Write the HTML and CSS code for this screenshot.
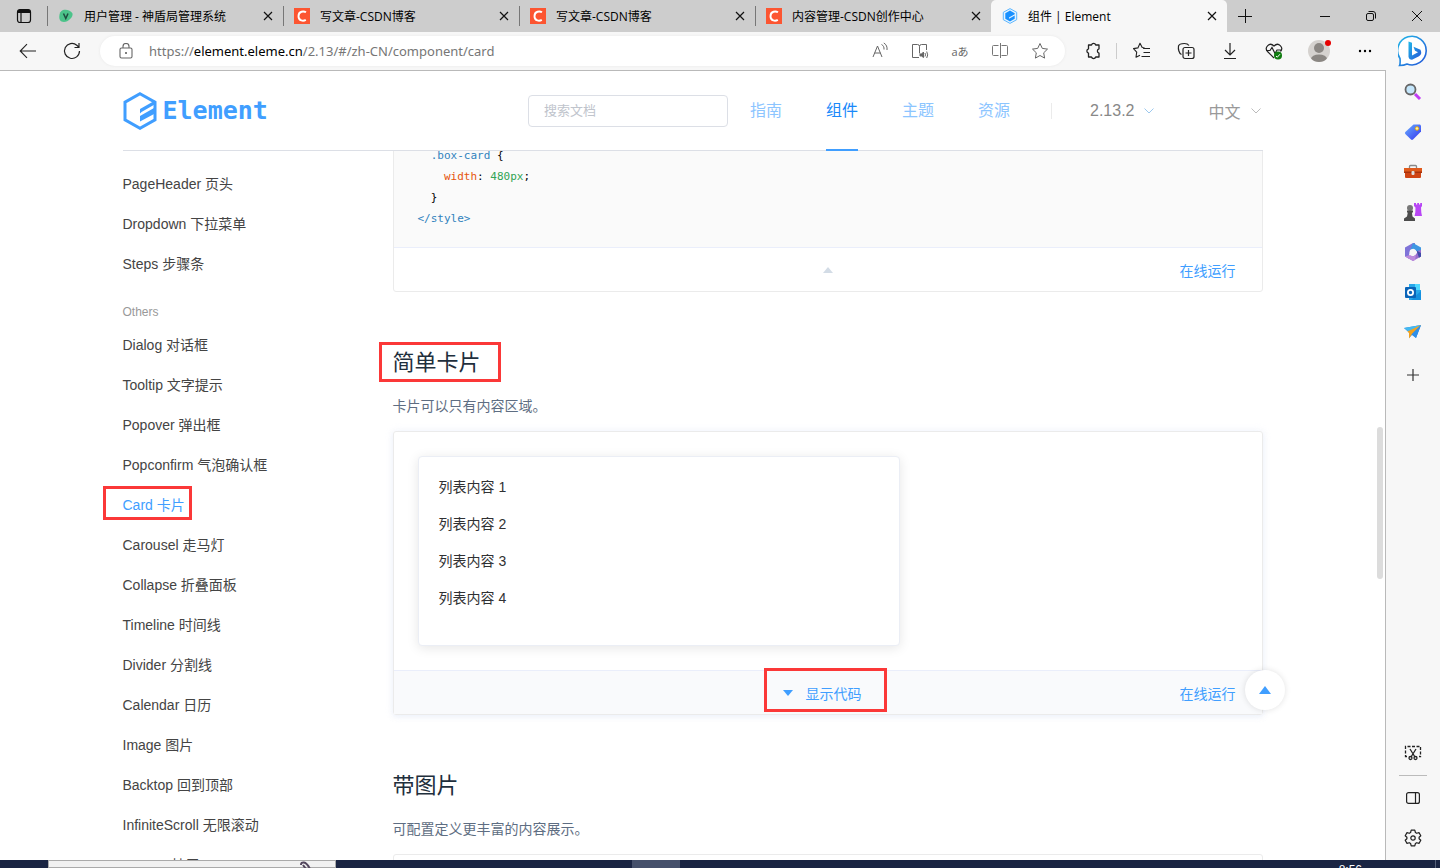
FILE: index.html
```html
<!DOCTYPE html>
<html lang="zh-CN">
<head>
<meta charset="utf-8">
<title>组件 | Element</title>
<link rel="stylesheet" href="styles.css">
</head>
<body>
<div class="browser">
  <div class="tabstrip">
    <button class="tab-menu" aria-label="标签页操作"><svg width="16" height="16" viewBox="0 0 16 16"><rect x="1.5" y="1.5" width="13" height="13" rx="2.5" fill="none" stroke="#111" stroke-width="1.2"/><path d="M1.5 5V4a2.500 2.500 0 0 1 2.500-2.500h8a2.500 2.500 0 0 1 2.500 2.500v1z" fill="#111"/><path d="M5 5v9.500" stroke="#111" stroke-width="1.2"/></svg></button>
    <div class="tab">
      <svg class="favicon" width="16" height="16" viewBox="0 0 16 16"><path d="M5 2c3-1 8 0 9.500 3.500C15.500 9 10 14 6 14S1 11 1.300 8 2.500 3 5 2z" fill="#4cc38a"/><path d="M5.500 5.500 7.800 10.500 10 5.500" fill="none" stroke="#1f4d3f" stroke-width="1.500"/></svg>
      <a class="tab-title" href="#">用户管理 - 神盾局管理系统</a>
      <button class="close" aria-label="关闭"><svg width="12" height="12" viewBox="0 0 12 12"><path d="M2 2l8 8M10 2l-8 8" stroke="#111" stroke-width="1.200"/></svg></button>
    </div>
    <div class="tab">
      <svg class="favicon" width="16" height="16" viewBox="0 0 16 16"><path d="M0 0h16v16H0z" fill="#fc5531"/><path d="M12 4.300C10 3 4.500 2.800 4.500 8.200c0 5 5 5.100 7.300 3.700" fill="none" stroke="#fff" stroke-width="1.900"/></svg>
      <a class="tab-title" href="#">写文章-CSDN博客</a>
      <button class="close" aria-label="关闭"><svg width="12" height="12" viewBox="0 0 12 12"><path d="M2 2l8 8M10 2l-8 8" stroke="#111" stroke-width="1.200"/></svg></button>
    </div>
    <div class="tab">
      <svg class="favicon" width="16" height="16" viewBox="0 0 16 16"><path d="M0 0h16v16H0z" fill="#fc5531"/><path d="M12 4.300C10 3 4.500 2.800 4.500 8.200c0 5 5 5.100 7.300 3.700" fill="none" stroke="#fff" stroke-width="1.900"/></svg>
      <a class="tab-title" href="#">写文章-CSDN博客</a>
      <button class="close" aria-label="关闭"><svg width="12" height="12" viewBox="0 0 12 12"><path d="M2 2l8 8M10 2l-8 8" stroke="#111" stroke-width="1.200"/></svg></button>
    </div>
    <div class="tab">
      <svg class="favicon" width="16" height="16" viewBox="0 0 16 16"><path d="M0 0h16v16H0z" fill="#fc5531"/><path d="M12 4.300C10 3 4.500 2.800 4.500 8.200c0 5 5 5.100 7.300 3.700" fill="none" stroke="#fff" stroke-width="1.900"/></svg>
      <a class="tab-title" href="#">内容管理-CSDN创作中心</a>
      <button class="close" aria-label="关闭"><svg width="12" height="12" viewBox="0 0 12 12"><path d="M2 2l8 8M10 2l-8 8" stroke="#111" stroke-width="1.200"/></svg></button>
    </div>
    <div class="tab tab-active">
      <svg class="favicon" width="16" height="16" viewBox="0 0 16 16"><path d="M8 .6l6.700 3.700v7.400L8 15.400l-6.700-3.700V4.300z" fill="#e6f4ff" stroke="#5cb6ff"/><path d="M8 2.500l4.700 2.700v1L7 9.500v1.300l5.700-3.300v3.300L8 13.500l-4.700-2.700V5.200z" fill="#1890ff"/></svg>
      <a class="tab-title" href="#">组件 | Element</a>
      <button class="close" aria-label="关闭"><svg width="12" height="12" viewBox="0 0 12 12"><path d="M2 2l8 8M10 2l-8 8" stroke="#111" stroke-width="1.200"/></svg></button>
    </div>
    <button class="new-tab" aria-label="新建标签页"><svg width="14" height="14" viewBox="0 0 14 14"><path d="M7.500 0v14M0 7.500h14" stroke="#111"/></svg></button>
    <div class="window-buttons">
      <button aria-label="最小化"><svg width="12" height="12" viewBox="0 0 12 12"><path d="M1 6.500h10" stroke="#111"/></svg></button>
      <button aria-label="还原"><svg width="12" height="12" viewBox="0 0 12 12"><rect x="1.500" y="3.500" width="7" height="7" rx="1.500" fill="none" stroke="#111"/><path d="M3.500 1.500H8a2.500 2.500 0 0 1 2.500 2.500v4.500" fill="none" stroke="#111"/></svg></button>
      <button aria-label="关闭窗口"><svg width="12" height="12" viewBox="0 0 12 12"><path d="M1 1l10 10M11 1L1 11" stroke="#111"/></svg></button>
    </div>
  </div>

  <div class="toolbar">
    <button class="tool" aria-label="返回"><svg width="18" height="16" viewBox="0 0 18 16"><path d="M17 8H1.500M8 1.200L1.200 8 8 14.800" fill="none" stroke="#222" stroke-width="1.100"/></svg></button>
    <button class="tool" aria-label="刷新"><svg width="18" height="18" viewBox="0 0 18 18"><path d="M16.500 9a7.500 7.500 0 1 1-2.700-5.800L16 5.200M16 1v4.500h-4.500" fill="none" stroke="#222" stroke-width="1.200"/></svg></button>
    <div class="omnibox">
      <svg class="lock" width="14" height="16" viewBox="0 0 14 16"><rect x="1" y="5" width="12" height="10" rx="1.500" fill="none" stroke="#666" stroke-width="1.100"/><path d="M4 5V3.500a3 3 0 0 1 6 0V5" fill="none" stroke="#666" stroke-width="1.100"/><circle cx="7" cy="10" r="1" fill="#555"/></svg>
      <div class="url">https://<span class="host">element.eleme.cn</span>/2.13/#/zh-CN/component/card</div>
      <button class="omni-tool" aria-label="大声朗读"><svg width="18" height="18" viewBox="0 0 18 18" fill="none" stroke="#666"><path d="M2 15L6.500 4 11 15M3.700 11h5.700M10.500 2.500c2 1 2.700 2.800 2.500 5M12.800 1c2.600 1.500 3.600 4 3.200 7"/></svg></button>
      <button class="omni-tool" aria-label="沉浸式阅读器"><svg width="18" height="18" viewBox="0 0 18 18" fill="none" stroke="#666"><path d="M8 15.500H1.500v-13h5q2 0 2 2v7M8.500 4.500q0-2 2-2h5V8"/><path d="M9 12h1.500L12.500 10v5.500l-2-1.500H9z" fill="#666"/><path d="M14 11q1 2 0 3.500M15.700 9.500q2 3.500 0 6.500"/></svg></button>
      <button class="omni-tool omni-text" aria-label="翻译">aあ</button>
      <button class="omni-tool" aria-label="分屏"><svg width="18" height="18" viewBox="0 0 18 18" fill="none" stroke="#777"><path d="M7.500 3.500h-5a1 1 0 0 0-1 1v8a1 1 0 0 0 1 1h5M10.500 3.500h5a1 1 0 0 1 1 1v8a1 1 0 0 1-1 1h-5M9.500 1v15"/></svg></button>
      <button class="omni-tool" aria-label="收藏此页"><svg width="18" height="18" viewBox="0 0 18 18"><path d="M9 1.500l2.300 4.900 5.200.7-3.800 3.700.9 5.300L9 13.500l-4.600 2.600.9-5.300L1.500 7.100l5.200-.7z" fill="none" stroke="#666" stroke-linejoin="round"/></svg></button>
    </div>
    <div class="toolbar-end">
      <button class="tool tool-ext" aria-label="扩展"><svg width="18" height="18" viewBox="0 0 18 18"><path d="M4.500 3h3a2.200 2.200 0 0 1 4.200 0H15v3.800a2.300 2.300 0 0 0 0 4.400V15h-3.300a2.200 2.200 0 0 1-4.200 0h-3v-3.800a2.300 2.300 0 0 1 0-4.400z" fill="none" stroke="#222" stroke-width="1.300" stroke-linejoin="round"/></svg></button>
      <span class="tool-sep"></span>
      <button class="tool" aria-label="收藏夹"><svg width="18" height="18" viewBox="0 0 18 18" fill="none" stroke="#222" stroke-width="1.100" stroke-linejoin="round"><path d="M11.500 5.800L9.200 5.500 7 1.300 4.900 5.900l-4.400.7 3.200 3.500-.7 5.200 4-2M10 6.500h7M10.500 10.500H17M8.500 14.500H17"/></svg></button>
      <button class="tool" aria-label="集锦"><svg width="18" height="18" viewBox="0 0 18 18" fill="none" stroke="#222" stroke-width="1.200"><rect x="6" y="5.500" width="11" height="11" rx="2"/><path d="M11.500 8v6M8.500 11h6M4.500 12.500C2 11.500 1 7 1.500 4c.5-2 3-2.500 6-2.500 3 0 3.500.5 4.500 2"/></svg></button>
      <button class="tool" aria-label="下载"><svg width="16" height="18" viewBox="0 0 16 18" fill="none" stroke="#222" stroke-width="1.200"><path d="M8 1v11.500M3 8l5 5 5-5M2 16.500h12"/></svg></button>
      <button class="tool" aria-label="浏览器概要"><svg width="18" height="18" viewBox="0 0 18 18"><path d="M9 16L2.500 9.500C-1 5.500 4.500-.5 9 4c4.500-4.500 10 1.500 6.500 5.500M1 8.500h4l2-3 3 6 2-3.500h4" fill="none" stroke="#222" stroke-width="1.200"/><circle cx="13" cy="13.500" r="4" fill="#107c10"/><path d="M11 14l1.300 1.200 2.700-3" fill="none" stroke="#fff"/></svg></button>
      <button class="tool tool-wide" aria-label="用户"><svg width="28" height="28" viewBox="0 0 28 28"><defs><clipPath id="avatar"><circle cx="14" cy="14" r="11"/></clipPath></defs><circle cx="14" cy="14" r="11" fill="#d5d2cf"/><circle cx="14" cy="11" r="5" fill="#8b8783"/><ellipse cx="14" cy="22" rx="8" ry="4.500" fill="#8b8783" clip-path="url(#avatar)"/><circle cx="23" cy="6" r="3" fill="#e60000"/></svg></button>
      <button class="tool tool-wide" aria-label="更多"><svg width="14" height="4" viewBox="0 0 14 4"><circle cx="2" cy="2" r="1.200"/><circle cx="7" cy="2" r="1.200"/><circle cx="12" cy="2" r="1.200"/></svg></button>
      <button class="tool tool-bing" aria-label="Bing"><svg width="32" height="32" viewBox="0 0 32 32"><defs><linearGradient id="bing" x1="0" y1="0" x2="1" y2="1"><stop offset="0" stop-color="#22b8e8"/><stop offset="1" stop-color="#2456d8"/></linearGradient></defs><path d="M1.500 30.500q1-2 .5-7A14.300 14.300 0 1 1 9 29q-3 1.500-7.500 1.500z" fill="#fff" stroke="url(#bing)" stroke-width="1.600"/><path d="M10.500 6.500l3.500 1.300v12.700l6-3.200-3-1.500-1.500-4 7 3q2 4.500-1.500 6.500l-7 3.500q-3 0-3.500-3z" fill="url(#bing)"/></svg></button>
    </div>
  </div>

  <div class="workspace">
    <div class="page">
      <header class="site-header">
        <div class="header-inner">
          <a class="logo" href="#" aria-label="Element">
            <svg width="34" height="38" viewBox="0 0 34 38"><path d="M17 1.700L32 10.200v17.600L17 36.300 2 27.800V10.200z" fill="none" stroke="#409eff" stroke-width="3"/><path d="M17 17L32 8.500v3.700L18.500 20 17 21.500zM17 24l14-8v4L18.500 27 17 28.500zM17 29.500v-3L32 18v3.500z" fill="#409eff"/></svg>
            <span class="wordmark">Element</span>
          </a>
          <input class="search" type="text" placeholder="搜索文档" aria-label="搜索文档">
          <nav class="nav">
            <a href="#">指南</a>
            <a href="#" class="nav-active">组件</a>
            <a href="#">主题</a>
            <a href="#">资源</a>
          </nav>
          <span class="nav-sep"></span>
          <button class="dropdown">2.13.2<svg width="10" height="6" viewBox="0 0 10 6"><path d="M.5.500L5 5 9.500.500" fill="none" stroke="#9cc8ee"/></svg></button>
          <button class="dropdown dropdown-lang">中文<svg width="10" height="6" viewBox="0 0 10 6"><path d="M.5.500L5 5 9.500.500" fill="none" stroke="#bbb"/></svg></button>
        </div>
      </header>

      <div class="docs">
        <nav class="side-nav">
          <a href="#">PageHeader 页头</a>
          <a href="#">Dropdown 下拉菜单</a>
          <a href="#">Steps 步骤条</a>
          <div class="group-title">Others</div>
          <a href="#">Dialog 对话框</a>
          <a href="#">Tooltip 文字提示</a>
          <a href="#">Popover 弹出框</a>
          <a href="#">Popconfirm 气泡确认框</a>
          <a href="#" class="side-active">Card 卡片<span class="mark mark-side"></span></a>
          <a href="#">Carousel 走马灯</a>
          <a href="#">Collapse 折叠面板</a>
          <a href="#">Timeline 时间线</a>
          <a href="#">Divider 分割线</a>
          <a href="#">Calendar 日历</a>
          <a href="#">Image 图片</a>
          <a href="#">Backtop 回到顶部</a>
          <a href="#">InfiniteScroll 无限滚动</a>
          <a href="#">Drawer 抽屉</a>
        </nav>
        <main class="content">
          <section class="demo demo-scrolled">
            <div class="code">
              <div class="line in-1"><span class="c-tag">.box-card</span><span> {</span></div>
              <div class="line in-2"><span class="c-prop">width</span><span>: </span><span class="c-num">480px</span><span>;</span></div>
              <div class="line in-1"><span>}</span></div>
              <div class="line"><span class="c-tag">&lt;/style&gt;</span></div>
            </div>
            <div class="control">
              <button class="toggle toggle-up" aria-label="隐藏代码"><svg width="10" height="6" viewBox="0 0 10 6"><path d="M0 6l5-6 5 6z" fill="#d3dce6"/></svg></button>
              <a class="run" href="#">在线运行</a>
            </div>
          </section>

          <h3><span class="mark mark-title"></span>简单卡片</h3>
          <p>卡片可以只有内容区域。</p>
          <section class="demo demo-hover">
            <div class="source">
              <ul class="card">
                <li>列表内容 1</li>
                <li>列表内容 2</li>
                <li>列表内容 3</li>
                <li>列表内容 4</li>
              </ul>
            </div>
            <div class="control control-hover">
              <button class="toggle"><svg width="10" height="6" viewBox="0 0 10 6"><path d="M0 0h10L5 6z" fill="#409eff"/></svg>显示代码<span class="mark mark-toggle"></span></button>
              <a class="run" href="#">在线运行</a>
            </div>
          </section>

          <h3>带图片</h3>
          <p>可配置定义更丰富的内容展示。</p>
          <section class="demo"><div class="source"></div></section>
        </main>
      </div>
      <button class="backtop" aria-label="回到顶部"><svg width="12" height="8" viewBox="0 0 12 8"><path d="M0 8l6-8 6 8z" fill="#409eff"/></svg></button>
      <span class="scroll-thumb"></span>
    </div>

    <aside class="edge-bar">
      <button aria-label="搜索"><svg width="18" height="18" viewBox="0 0 18 18"><path d="M11 11l5 5" stroke="#c03cf5" stroke-width="3"/><circle cx="6.500" cy="6.500" r="5" fill="#c4e6fb" stroke="#666" stroke-width="1.800"/></svg></button>
      <button aria-label="购物"><svg width="18" height="18" viewBox="0 0 18 18"><defs><linearGradient id="tag" x1="0" y1="0" x2="1" y2="1"><stop offset="0" stop-color="#69b1ff"/><stop offset="1" stop-color="#3433ee"/></linearGradient></defs><path d="M9.500 1.500h6.500l1 1v6L9 16.500q-1 .8-2 0L1.300 11q-.8-1 0-2z" fill="url(#tag)"/><circle cx="13" cy="5.500" r="1.800" fill="#fff3a3" stroke="#e0a512"/></svg></button>
      <button aria-label="工具"><svg width="18" height="18" viewBox="0 0 18 18"><path d="M5.500 5V3.500q0-1 1-1h5q1 0 1 1V5" fill="none" stroke="#888" stroke-width="1.300"/><path d="M0 5h18v5H0z" fill="#e05a1c"/><path d="M1 9.500h16V14q0 1-1 1H2q-1 0-1-1z" fill="#cf4414"/><path d="M0 8.500h18v1.500H0z" fill="#a6320d"/><rect x="7.500" y="8" width="3" height="4" rx="1" fill="#ddd"/></svg></button>
      <button aria-label="游戏"><svg width="18" height="18" viewBox="0 0 18 18"><path d="M10 0h2v1.500h1.200V0h1.800v1.500h1.200V0H18v3l-1 1.500.3 5 .7 3.500h-7.500l.8-3.500.2-5L10 3z" fill="#b846f5"/><circle cx="6" cy="5" r="3" fill="#777"/><path d="M3 7.500h6v1.500L8 10l.5 3.500L11 15.500V18H0v-2.500l3-2 .7-3.500L3 9z" fill="#4c4c4c"/></svg></button>
      <button aria-label="Microsoft 365"><svg width="18" height="18" viewBox="0 0 18 18"><path d="M9 0L1 4.500v9l4 2.300V12L6 7l5-2.500V0z" fill="#7f74d8"/><path d="M9 0l8 4.500v6L12.500 8 9 5.500 6 7.500z" fill="#3e97e2"/><path d="M17 7v6.500L9 18l-6-3.500 7-1.500 3-3V8z" fill="#9a6fce"/><path d="M12.500 7.500L17 10v3.500l-2 1.200z" fill="#3f4ba8"/><path d="M1 13.500l5-1.500 3 1.500 3-1.500-1 5-2 1z" fill="#bd8bdc"/><circle cx="9" cy="9.200" r="3.200" fill="#f7f7f7"/></svg></button>
      <button aria-label="Outlook"><svg width="18" height="18" viewBox="0 0 18 18"><path d="M5 1h11v6h1v10H5z" fill="#28a8ea"/><path d="M11 1h5v6h-5z" fill="#50d9ff"/><path d="M17 8v9H7z" fill="#1490df"/><rect x="1" y="4" width="11" height="11" rx="1" fill="#0a64b8"/><circle cx="6.500" cy="9.500" r="2.600" fill="none" stroke="#fff" stroke-width="1.800"/></svg></button>
      <button aria-label="Drop"><svg width="18" height="18" viewBox="0 0 18 18"><path d="M0 5l17-3-5 13-4-3-3 3 .5-5z" fill="#2686e3"/><path d="M0 5l17-3-8 6-4 1z" fill="#43b9f0"/><path d="M3.500 8.500L17 2 8 11l-3 4.500V10z" fill="#f4a21c"/><path d="M17 2L12 15l-4-4z" fill="#2f8fe8"/></svg></button>
      <button class="edge-add" aria-label="自定义"><svg width="12" height="12" viewBox="0 0 12 12"><path d="M6 0v12M0 6h12" stroke="#333" stroke-width="1.200"/></svg></button>
      <div class="edge-bottom">
        <button aria-label="截图"><svg width="18" height="18" viewBox="0 0 18 18" fill="none" stroke="#222" stroke-width="1.300"><path d="M3 12.500H1.500v-10h15v10H15" stroke-dasharray="3 1.500"/><path d="M6 5l5 8M12 5l-5 8"/><circle cx="6.500" cy="14" r="1.500"/><circle cx="11.500" cy="14" r="1.500"/></svg></button>
        <span class="edge-line"></span>
        <button aria-label="侧边栏"><svg width="14" height="12" viewBox="0 0 14 12" fill="none" stroke="#222" stroke-width="1.200"><rect x=".6" y=".6" width="12.800" height="10.800" rx="2"/><path d="M9.500.6v10.800"/></svg></button>
        <button aria-label="设置"><svg width="18" height="18" viewBox="0 0 18 18" fill="none" stroke="#222" stroke-width="1.200" stroke-linejoin="round"><path d="M7.200 1.200h3.600l.6 2.300 1.300.8 2.300-.7 1.800 3.100-1.700 1.600v1.400l1.700 1.600-1.800 3.100-2.300-.7-1.300.8-.6 2.300H7.200l-.6-2.300-1.300-.8-2.300.7-1.800-3.100 1.700-1.600V8.300L1.200 6.700 3 3.600l2.300.7 1.300-.8z"/><circle cx="9" cy="9" r="2.200"/></svg></button>
      </div>
    </aside>
  </div>

  <footer class="taskbar">
    <div class="task-search"><svg width="12" height="8" viewBox="0 0 12 8"><path d="M2 4q0-3 3-2.500T11 8M4 4l3 4" fill="none" stroke="#54475f" stroke-width="2"/></svg></div>
    <div class="task-active"></div>
    <div class="clock">8:56</div>
  </footer>
</div>
</body>
</html>
```

FILE: styles.css
```css
* { box-sizing: border-box; }
body {
  margin: 0;
  font-family: "Liberation Sans", "Noto Sans CJK SC", sans-serif;
  font-size: 14px;
  color: #303133;
}
button {
  display: flex;
  align-items: center;
  justify-content: center;
  padding: 0;
  border: 0;
  background: none;
  font: inherit;
}
a { color: inherit; text-decoration: none; }
svg { flex: none; }
.browser { display: flex; flex-direction: column; height: 100vh; overflow: hidden; }

/* Tab strip */
.tabstrip {
  display: flex;
  flex: none;
  height: 32px;
  background: #cdcdcd;
  font-family: "Open Sans", "Noto Sans CJK SC", sans-serif;
  font-size: 12px;
  color: #000;
}
.tab-menu { width: 47px; }
.tab {
  display: flex;
  align-items: center;
  gap: 10px;
  flex: 0 1 236px;
  padding: 0 9px 0 10px;
  background: linear-gradient(#777, #777) left center / 1px 20px no-repeat;
}
.tab-active { background: #f7f7f7; border-radius: 5px 5px 0 0; }
.tab-title { flex: 1; white-space: nowrap; overflow: hidden; }
.favicon { margin-left: 1px; }
.close { width: 12px; height: 12px; }
.new-tab { width: 36px; }
.window-buttons { display: flex; margin-left: auto; }
.window-buttons button { width: 46px; }

/* Toolbar */
.toolbar { display: flex; align-items: center; flex: none; height: 38px; padding-left: 6px; background: #f7f7f7; }
.tool { width: 44px; height: 32px; }
.omnibox {
  display: flex;
  align-items: center;
  flex: 1;
  height: 30px;
  margin-left: 6px;
  padding: 0 5px 0 19px;
  border-radius: 15px;
  background: #fff;
  box-shadow: 0 0 3px #e8e8e8;
}
.url {
  flex: 1;
  margin-left: 16px;
  font-family: "Noto Sans", sans-serif;
  font-size: 13px;
  color: #767676;
}
.host { color: #000; }
.omni-tool { width: 40px; height: 30px; color: #666; }
.omni-text { font-family: "Open Sans", "Noto Sans CJK JP", sans-serif; font-size: 11px; }
.toolbar-end { display: flex; align-items: center; margin-left: 8px; }
.tool-ext { width: 40px; }
.tool-sep { width: 1px; height: 16px; margin: 0 3px; background: #ccc; }
.tool-wide { width: 46px; }
.tool-bing { width: 52px; }

/* Page frame */
.workspace { display: flex; flex: 1; min-height: 0; background: #f7f7f7; }
.page {
  position: relative;
  display: flex;
  flex-direction: column;
  flex: 1;
  min-width: 0;
  overflow: hidden;
  border-top: 1px solid #b9b9b9;
  border-right: 1px solid #b9b9b9;
  background: #fff;
}
.scroll-thumb { position: absolute; top: 356px; right: 2px; width: 6px; height: 152px; border-radius: 3px; background: #dcdcdc; }

/* Site header */
.header-inner, .docs { width: 100%; max-width: 1140px; margin: 0 auto; }
.site-header { flex: none; }
.header-inner { display: flex; height: 80px; padding-right: 2px; border-bottom: 1px solid #dcdfe6; }
.logo { display: flex; align-items: center; gap: 6px; margin-right: auto; color: #409eff; }
.wordmark { font-family: "DejaVu Sans Mono", monospace; font-size: 25px; font-weight: 700; line-height: 32px; }
.search {
  align-self: center;
  width: 200px;
  height: 32px;
  padding: 0 15px;
  border: 1px solid #dcdfe6;
  border-radius: 4px;
  font: inherit;
  font-size: 13px;
}
.search::placeholder { color: #c0c4cc; }
.nav { display: flex; gap: 44px; margin-left: 22px; }
.nav a { height: 80px; color: #8cc5ff; font-size: 16px; line-height: 80px; }
.nav .nav-active { border-bottom: 2px solid #409eff; color: #1989fa; }
.nav-sep { align-self: center; width: 1px; height: 16px; margin: 0 38px 0 41px; background: #ebebeb; }
.dropdown { gap: 10px; height: 79px; color: #888; font-size: 16px; }
.dropdown-lang { margin-left: 54px; color: #999; }

/* Documentation body */
.docs { display: flex; flex: 1; min-height: 0; overflow: visible; clip-path: inset(0 -40px); }
.side-nav { width: 270px; flex: none; padding-top: 13px; }
.side-nav a { position: relative; display: block; height: 40px; line-height: 40px; color: #444; }
.side-nav .side-active { color: #409eff; }
.group-title { margin-top: 15px; line-height: 26px; font-size: 12px; color: #999; }
.content { flex: 1; min-width: 0; }
.content h3 { position: relative; margin: 55px 0 16px; font-size: 22px; font-weight: 400; line-height: 32px; color: #1f2f3d; }
.content p { margin: 0 0 14px; line-height: 22px; color: #5e6d82; }
.demo { border: 1px solid #ebebeb; border-radius: 3px; }
.demo-scrolled { margin-top: -25px; }
.demo-hover { box-shadow: 0 0 8px rgba(232, 237, 250, .6), 0 2px 4px rgba(232, 237, 250, .5); }
.code {
  padding: 18px 24px;
  background: #fafafa;
  font-family: "DejaVu Sans Mono", monospace;
  font-size: 11px;
  line-height: 21px;
  color: #000;
}
.line { display: flex; white-space: pre; }
.in-1 { padding-left: 2ch; }
.in-2 { padding-left: 4ch; }
.c-tag { color: #3182bd; }
.c-prop { color: #e6550d; }
.c-num { color: #31a354; }
.control {
  display: grid;
  grid-template-columns: 1fr auto 1fr;
  align-items: center;
  height: 44px;
  border-top: 1px solid #eaeefb;
  color: #409eff;
}
.control-hover { background: #f9fafc; }
.toggle { position: relative; grid-column: 2; gap: 13px; padding-right: 11px; color: #409eff; }
.toggle-up { padding: 0; }
.run { grid-column: 3; justify-self: end; padding-right: 26px; }
.source { padding: 24px; }
.card {
  max-width: 482px;
  margin: 0;
  padding: 21px 20px 19px;
  list-style: none;
  border: 1px solid #ebeef5;
  border-radius: 4px;
  background: #fff;
  box-shadow: 0 2px 12px rgba(0, 0, 0, .1);
}
.card li { margin-bottom: 18px; line-height: 19px; }
.backtop {
  position: absolute;
  right: 100px;
  bottom: 150px;
  width: 40px;
  height: 40px;
  border-radius: 50%;
  background: #fff;
  box-shadow: 0 0 6px rgba(0, 0, 0, .12);
}

/* Red highlight frames */
.mark { position: absolute; border: 3px solid #fb3838; }
.mark-side { left: -20px; top: 1px; width: 89px; height: 34px; }
.mark-title { left: -14px; top: -5px; width: 122px; height: 40px; }
.mark-toggle { left: -19px; top: -15px; width: 123px; height: 44px; }

/* Edge sidebar */
.edge-bar { display: flex; flex-direction: column; align-items: center; flex: none; width: 54px; padding: 2px 0; }
.edge-bar button { width: 40px; height: 40px; }
.edge-bar .edge-add { margin-top: 3px; }
.edge-bottom { display: flex; flex-direction: column; align-items: center; margin-top: auto; }
.edge-line { width: 28px; height: 1px; margin: 2px 0; background: #bbb; }

/* Taskbar */
.taskbar { display: flex; flex: none; height: 8px; overflow: hidden; background: #1a2543; color: #fff; }
.task-search { display: flex; justify-content: flex-end; width: 288px; margin-left: 48px; padding-right: 24px; border: 1px solid #aaa; background: #f1f1f1; }
.task-active { width: 48px; margin-left: 296px; background: #45506b; }
.clock { margin-left: auto; margin-right: 4px; padding: 3px 73px 0 0; border-right: 1px solid #56617a; font-size: 12px; line-height: 14px; }
```
